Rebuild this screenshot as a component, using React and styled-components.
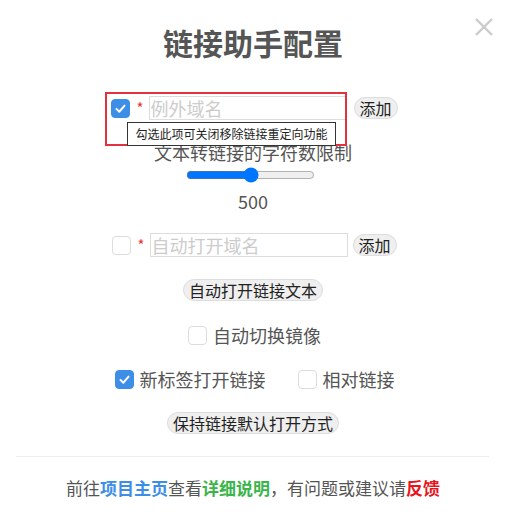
import React, { useState } from 'react'
import styled, { createGlobalStyle } from 'styled-components';

const Global = createGlobalStyle`
    body {
        margin: 0;
        background: #fff;
        font-family: "Noto Sans CJK SC", "Noto Sans", sans-serif;
    }
`;

const Panel = styled.div`
    position: relative;
    width: 506px;
    height: 519px;
    padding-top: 22px;
    box-sizing: border-box;
    display: flex;
    flex-direction: column;
    align-items: center;
    color: #555;
`;

const Title = styled.h1`
    margin: 0;
    font-size: 30px;
    line-height: 40px;
    font-weight: 700;
    color: #555;
`;

const Close = styled.svg`
    position: absolute;
    top: 17px;
    right: 12px;
`;

const Row = styled.div`
    display: flex;
    align-items: center;
    justify-content: center;
    gap: ${({ gap }) => gap || 6}px;
    margin-top: ${({ top }) => top || 0}px;
    padding-left: ${({ shift }) => shift || 0}px;
`;

const Group = styled.label`
    position: relative;
    display: flex;
    align-items: center;
    gap: 6px;
    font-size: 18px;
    line-height: 24px;
    color: #555;
`;

const Box = styled.span`
    width: 19px;
    height: 19px;
    box-sizing: border-box;
    border-radius: 4px;
    display: inline-flex;
    align-items: center;
    justify-content: center;
    background: ${({ checked }) => (checked ? '#3d8ee6' : '#fff')};
    border: 1px solid ${({ checked }) => (checked ? '#3d8ee6' : '#ddd')};
`;

const Star = styled.span`
    color: #e53935;
    font-size: 15px;
    line-height: 24px;
    margin-right: -1px;
`;

const Input = styled.input`
    width: 198px;
    height: 24px;
    box-sizing: border-box;
    border: 1px solid #ddd;
    padding: 0 1px;
    font-size: 18px;
    font-family: inherit;
    outline: none;
    &::placeholder { color: #ccc; }
`;

const Button = styled.button`
    height: 22px;
    padding: 0 5px;
    border: 1px solid #ddd;
    border-radius: 11px;
    background: #efefef;
    color: #222;
    font-size: 16px;
    line-height: 20px;
    font-family: inherit;
    margin-top: ${({ top }) => top || 0}px;
    margin-left: ${({ shift }) => shift || 0}px;
`;

const Highlight = styled.div`
    position: absolute;
    left: -6px;
    top: -4px;
    right: 0;
    bottom: -26px;
    border: 2px solid #e2323f;
    pointer-events: none;
`;

const Tip = styled.div`
    position: absolute;
    left: 16px;
    top: 26px;
    height: 24px;
    padding: 0 7px;
    box-sizing: border-box;
    border: 1px solid #333;
    background: #fff;
    color: #222;
    font-size: 12px;
    line-height: 22px;
    white-space: nowrap;
    z-index: 2;
`;

const Label = styled.div`
    margin-top: ${({ top }) => top || 0}px;
    font-size: 18px;
    line-height: 24px;
    color: #555;
`;

const Range = styled.input`
    margin: 3px 5px 0 0;
    height: 16px;
    accent-color: #0075ff;
`;

const Divider = styled.hr`
    align-self: stretch;
    margin: 22px 17px 0 16px;
    border: 0;
    border-top: 1px solid #eee;
`;

const Footer = styled.p`
    margin: 19px 0 0;
    font-size: 17px;
    line-height: 24px;
    color: #555;
`;

const Link = styled.b`
    color: ${({ tone }) => tone};
    font-weight: 700;
`;

function Check({ checked }) {
    return (
        <Box checked={checked}>
            {checked && (
                <svg width="13" height="13" viewBox="0 0 16 16" fill="none" stroke="#fff" strokeWidth="2.4" strokeLinecap="round" strokeLinejoin="round"><polyline points="3 8.5 6.5 12 13 4.5"></polyline></svg>
            )}
        </Box>
    )
}

export default function App() {
    const [limit, setLimit] = useState(500);
    return (
        <>
            <Global />
            <Panel>
                <Close width="20" height="20" viewBox="0 0 20 20" stroke="#ccc" strokeWidth="2.4"><line x1="2" y1="2" x2="18" y2="18"></line><line x1="18" y1="2" x2="2" y2="18"></line></Close>
                <Title>链接助手配置</Title>

                <Row top={34} gap={7} shift={3}>
                    <Group>
                        <Check checked />
                        <Star>*</Star>
                        <Input placeholder='例外域名' />
                        <Highlight />
                        <Tip>勾选此项可关闭移除链接重定向功能</Tip>
                    </Group>
                    <Button>添加</Button>
                </Row>

                <Label top={20}>文本转链接的字符数限制</Label>
                <Range type="range" min="0" max="1000" value={limit} onChange={e => setLimit(e.target.value)} />
                <Label top={6}>{limit}</Label>

                <Row top={20} gap={5} shift={3}>
                    <Group>
                        <Check />
                        <Star>*</Star>
                        <Input placeholder='自动打开域名' />
                    </Group>
                    <Button>添加</Button>
                </Row>

                <Button top={22}>自动打开链接文本</Button>

                <Row top={22} shift={3}>
                    <Group><Check />自动切换镜像</Group>
                </Row>

                <Row top={20} gap={32} shift={3}>
                    <Group><Check checked />新标签打开链接</Group>
                    <Group><Check />相对链接</Group>
                </Row>

                <Button top={21}>保持链接默认打开方式</Button>

                <Divider />

                <Footer>
                    前往<Link tone='#3d8ee6'>项目主页</Link>查看<Link tone='#3bb54a'>详细说明</Link>，有问题或建议请<Link tone='#e8141b'>反馈</Link>
                </Footer>
            </Panel>
        </>
    )
}
